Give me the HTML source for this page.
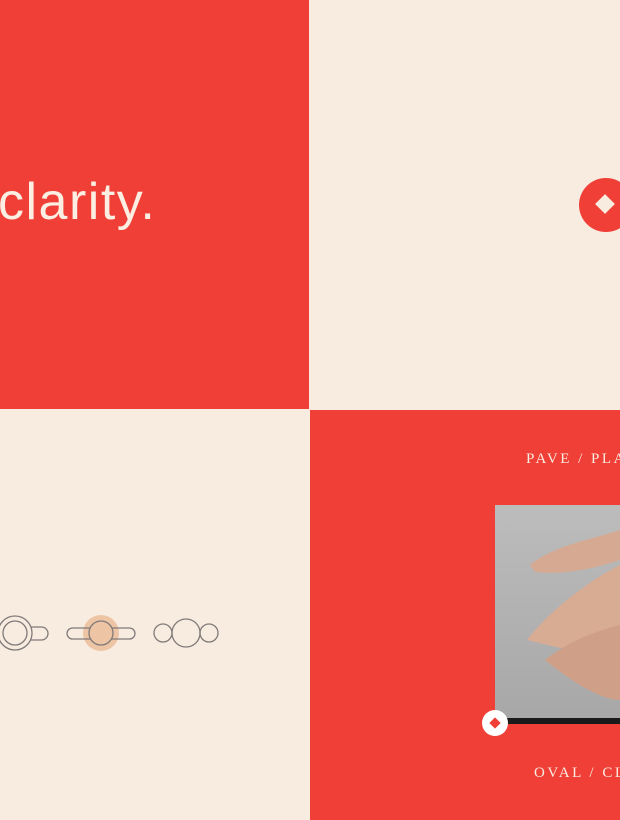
<!DOCTYPE html><html><head><style>
html,body{margin:0;width:620px;height:820px;overflow:hidden}
body{position:relative;background:#f8ece1;font-family:"Liberation Sans",sans-serif}
.r{position:absolute;background:#f03f36}
.t{position:absolute;color:#f8ece1;font-family:"Liberation Serif",serif;font-size:15px;letter-spacing:2.5px;white-space:nowrap}
.clip{position:absolute;left:0;top:0;width:620px;height:820px;overflow:hidden}
</style></head><body><div class="clip">
<div class="r" style="left:0;top:0;width:309px;height:409px"></div>
<div class="r" style="left:310px;top:410px;width:310px;height:410px"></div>
<div style="position:absolute;left:-2px;top:172px;font-size:52px;color:#fbeee2;letter-spacing:1.5px;white-space:nowrap">clarity.</div>
<svg style="position:absolute;left:0;top:0" width="620" height="820">
<circle cx="606" cy="205" r="27" fill="#f03f36"/>
<rect x="598" y="197" width="14" height="14" fill="#f8ece1" transform="rotate(45 605 204)"/>
<g fill="none" stroke="#807a78" stroke-width="1.3">
<rect x="25" y="627" width="23" height="13" rx="6.5"/>
<circle cx="15" cy="633" r="17" fill="#f8ece1"/><circle cx="15" cy="633" r="12"/>
<circle cx="101" cy="633" r="18" fill="#eec5a4" stroke="none"/>
<rect x="67" y="628" width="68" height="11" rx="5.5"/>
<circle cx="101" cy="633" r="12" fill="#eec5a4"/>
<circle cx="163" cy="633" r="9"/><circle cx="186" cy="633" r="14"/><circle cx="209" cy="633" r="9"/>
</g>
<defs><linearGradient id="g" x1="0" y1="0" x2="0" y2="1"><stop offset="0" stop-color="#bdbcbc"/><stop offset="1" stop-color="#a8a7a7"/></linearGradient></defs>
<rect x="495" y="505" width="125" height="218" fill="url(#g)"/>
<rect x="495" y="718" width="125" height="6" fill="#1a1a1a"/>
<path d="M530 565 C555 545 590 540 620 530 L620 560 C590 570 560 575 535 572Z" fill="#d6aa92"/>
<path d="M527 640 C550 610 590 580 620 565 L620 640 C600 660 570 650 527 640Z" fill="#d8ab93"/>
<path d="M545 660 C570 640 600 630 620 625 L620 700 C600 700 570 680 545 660Z" fill="#cf9f87"/>
<circle cx="495" cy="723" r="13" fill="#fff"/>
<rect x="491" y="719" width="8" height="8" fill="#f03f36" transform="rotate(45 495 723)"/>
</svg>
<div class="t" style="left:526px;top:451px">PAVE / PLATINUM</div>
<div class="t" style="left:534px;top:765px">OVAL / CLASSIC</div>
</div></body></html>
